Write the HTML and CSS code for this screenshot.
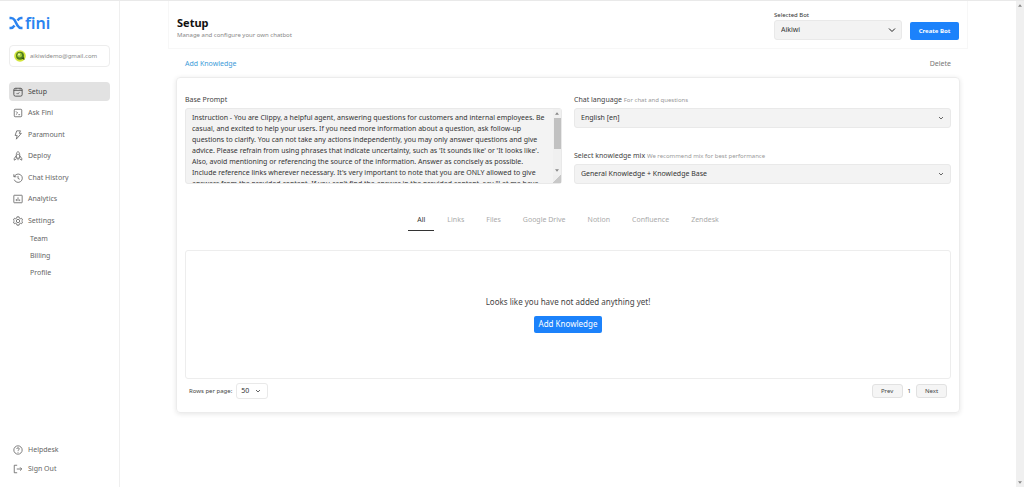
FILE: index.html
```html
<!DOCTYPE html>
<html lang="en">
<head>
    <meta charset="UTF-8">
    <meta name="viewport" content="width=device-width, initial-scale=1.0">
    <title>Fini - Setup</title>
    <link rel="stylesheet" href="styles.css">
</head>
<body>
    <div class="app">
        <!-- Sidebar -->
        <aside class="sidebar">
            <a class="logo" href="#" aria-label="Fini home">
                <svg class="logo-mark" viewBox="0 0 28 28">
                    <path d="M1 4h3c3 0 5 1 7 4l6 11c2 3 4 5 7 5h3"/>
                    <path d="M27 4h-3c-3 0-5 2-7 5"/>
                    <path d="M1 24h3c3 0 5-2 7-5"/>
                </svg>
                <span class="logo-text">fini</span>
            </a>

            <div class="account">
                <svg class="avatar" viewBox="0 0 12 12">
                    <circle cx="6" cy="6" r="5.800" fill="#d3e53c"/>
                    <circle cx="6" cy="5.800" r="4" fill="#4f7d1c"/>
                    <circle cx="5.600" cy="5.200" r="2.400" fill="#a4cc3a"/>
                    <circle cx="5" cy="4.600" r="1" fill="#eef7c0"/>
                    <path d="M7.500 8.500l3 1.500-.500-3z" fill="#36520f"/>
                </svg>
                <span>aikiwidemo@gmail.com</span>
            </div>

            <nav class="menu">
                <a class="menu-item active" href="#">
                    <svg viewBox="0 0 24 24"><rect x="2" y="3" width="20" height="19" rx="4"/><path d="M2 8h20M7 3v3M17 3v3M9 15l2 2 4-4"/></svg>
                    Setup
                </a>
                <a class="menu-item" href="#">
                    <svg viewBox="0 0 24 24"><rect x="3" y="3" width="18" height="18" rx="2"/><path d="M7 8l4 4-4 4M13 16h4"/></svg>
                    Ask Fini
                </a>
                <a class="menu-item" href="#">
                    <svg viewBox="0 0 24 24"><path d="M9 2h9l-3 6h5L8 22l2-9H5z"/></svg>
                    Paramount
                </a>
                <a class="menu-item" href="#">
                    <svg viewBox="0 0 24 24"><path d="M8 17V8c0-3 2-5 4-7 2 2 4 4 4 7v9zM8 11l-5 7v4l5-3M16 11l5 7v4l-5-3M12 17v5M10 8h4"/></svg>
                    Deploy
                </a>
                <a class="menu-item" href="#">
                    <svg viewBox="0 0 24 24"><path d="M2 3v6h6M3 9a10 10 0 1 1 0 7M12 7v6l4 2"/></svg>
                    Chat History
                </a>
                <a class="menu-item" href="#">
                    <svg viewBox="0 0 24 24"><rect x="2" y="3" width="20" height="18" rx="1"/><path d="M8 12v5M12 8v9M16 13v4"/></svg>
                    Analytics
                </a>
                <a class="menu-item" href="#">
                    <svg viewBox="0 0 24 24"><path d="M9.500 2h5l.700 3.200 2.300 1.300 3.100-1 2.500 4.300L20.700 12l2.400 2.200-2.500 4.300-3.100-1-2.300 1.300-.700 3.200h-5l-.700-3.200-2.300-1.300-3.100 1-2.500-4.300L3.300 12 .900 9.800l2.500-4.300 3.100 1 2.300-1.300z"/><circle cx="12" cy="12" r="4"/></svg>
                    Settings
                </a>
            </nav>
            <nav class="submenu">
                <a href="#">Team</a>
                <a href="#">Billing</a>
                <a href="#">Profile</a>
            </nav>

            <nav class="menu-bottom">
                <a class="menu-item" href="#">
                    <svg viewBox="0 0 24 24"><circle cx="12" cy="12" r="10"/><path d="M9 9.500c0-4 6-4 6 0 0 2-3 2.500-3 4.500M12 16.500v2"/></svg>
                    Helpdesk
                </a>
                <a class="menu-item" href="#">
                    <svg viewBox="0 0 24 24"><path d="M10 3H3v18h7M9 12h12M17 8l4 4-4 4"/></svg>
                    Sign Out
                </a>
            </nav>
        </aside>

        <!-- Main content -->
        <main class="main">
            <header class="header">
                <div class="header-title">
                    <h1>Setup</h1>
                    <p>Manage and configure your own chatbot</p>
                </div>
                <div class="bot-select">
                    <label for="bot">Selected Bot</label>
                    <div class="select select-dark">
                        <select id="bot"><option>Aikiwi</option></select>
                        <svg viewBox="0 0 8 8"><path d="M1 2.500l3 3 3-3"/></svg>
                    </div>
                </div>
                <button class="btn btn-create" type="button">Create Bot</button>
            </header>

            <div class="actions">
                <a class="link-add" href="#">Add Knowledge</a>
                <a class="link-delete" href="#">Delete</a>
            </div>

            <section class="card">
                <div class="form">
                    <div class="field">
                        <label for="prompt">Base Prompt</label>
                        <div class="prompt-box">
                            <textarea id="prompt">Instruction - You are Clippy, a helpful agent, answering questions for customers and internal employees. Be casual, and excited to help your users. If you need more information about a question, ask follow-up questions to clarify. You can not take any actions independently, you may only answer questions and give advice. Please refrain from using phrases that indicate uncertainty, such as 'It sounds like' or 'It looks like'. Also, avoid mentioning or referencing the source of the information. Answer as concisely as possible. Include reference links wherever necessary. It's very important to note that you are ONLY allowed to give answers from the provided content. If you can't find the answer in the provided content, say "Let me have</textarea>
                            <div class="prompt-scroll">
                                <svg viewBox="0 0 6 4"><path d="M0 4l3-4 3 4z"/></svg>
                                <span class="prompt-thumb"></span>
                                <svg viewBox="0 0 6 4"><path d="M0 0l3 4 3-4z"/></svg>
                                <span class="prompt-grip"></span>
                            </div>
                        </div>
                    </div>
                    <div class="field-column">
                        <div class="field">
                            <label for="language">Chat language <small>For chat and questions</small></label>
                            <div class="select">
                                <select id="language"><option>English [en]</option></select>
                                <svg viewBox="0 0 8 8"><path d="M2 3l2 2 2-2"/></svg>
                            </div>
                        </div>
                        <div class="field">
                            <label for="mix">Select knowledge mix <small>We recommend mix for best performance</small></label>
                            <div class="select">
                                <select id="mix"><option>General Knowledge + Knowledge Base</option></select>
                                <svg viewBox="0 0 8 8"><path d="M2 3l2 2 2-2"/></svg>
                            </div>
                        </div>
                    </div>
                </div>

                <div class="tabs" role="tablist">
                    <button class="tab active" type="button" role="tab" aria-selected="true">All</button>
                    <button class="tab" type="button" role="tab">Links</button>
                    <button class="tab" type="button" role="tab">Files</button>
                    <button class="tab" type="button" role="tab">Google Drive</button>
                    <button class="tab" type="button" role="tab">Notion</button>
                    <button class="tab" type="button" role="tab">Confluence</button>
                    <button class="tab" type="button" role="tab">Zendesk</button>
                </div>

                <div class="empty">
                    <p>Looks like you have not added anything yet!</p>
                    <button class="btn btn-add" type="button">Add Knowledge</button>
                </div>

                <div class="pagination">
                    <label for="rows">Rows per page:</label>
                    <div class="select select-rows">
                        <select id="rows"><option>50</option></select>
                        <svg viewBox="0 0 8 8"><path d="M2 3l2 2 2-2"/></svg>
                    </div>
                    <div class="pages">
                        <button class="page-btn" type="button">Prev</button>
                        <span>1</span>
                        <button class="page-btn" type="button">Next</button>
                    </div>
                </div>
            </section>
        </main>

        <!-- Page scroll track -->
        <div class="scroll-track">
            <svg viewBox="0 0 6 4"><path d="M0 4l3-4 3 4z"/></svg>
            <svg viewBox="0 0 6 4"><path d="M0 0l3 4 3-4z"/></svg>
        </div>
    </div>
</body>
</html>
```
FILE: styles.css
```css
* {
    box-sizing: border-box;
}
body {
    margin: 0;
    font-family: "Noto Sans", "Open Sans", sans-serif;
    font-size: 7px;
    line-height: 10px;
    color: #444;
    background: #fff;
}
a {
    color: inherit;
    text-decoration: none;
}
button, select, textarea {
    font-family: inherit;
    font-size: inherit;
    line-height: inherit;
    color: inherit;
    margin: 0;
}
svg {
    display: block;
    fill: none;
    stroke: currentColor;
    stroke-width: 2;
    flex: none;
}
.app {
    display: flex;
    min-height: 100vh;
    border-top: 1px solid #e9e9e9;
}

/* Sidebar */
.sidebar {
    display: flex;
    flex-direction: column;
    width: 120px;
    padding: 12px 9px;
    border-right: 1px solid #efefef;
    color: #666;
}
.logo {
    display: flex;
    align-items: center;
    gap: 2px;
    height: 20px;
    color: #2a83f0;
}
.logo-mark {
    width: 14px;
    height: 14px;
    stroke-width: 5;
}
.logo-text {
    font-family: "Noto Sans", sans-serif;
    font-size: 16px;
    font-weight: 600;
}
.account {
    display: flex;
    align-items: center;
    gap: 4px;
    height: 22px;
    margin-top: 12px;
    padding: 0 4px;
    border: 1px solid #ededed;
    border-radius: 4px;
    font-size: 6px;
    color: #888;
}
.avatar {
    width: 12px;
    height: 12px;
    stroke: none;
}
.menu {
    display: flex;
    flex-direction: column;
    justify-content: space-between;
    height: 148px;
    margin-top: 15px;
}
.menu-item {
    display: flex;
    align-items: center;
    gap: 5px;
    height: 19px;
    padding: 0 4px;
    border-radius: 4px;
}
.menu-item svg {
    width: 10px;
    height: 10px;
}
.menu-item.active {
    background: #e2e2e2;
    color: #444;
}
.submenu {
    display: flex;
    flex-direction: column;
    gap: 7px;
    padding: 4px 21px;
}
.menu-bottom {
    margin-top: auto;
    margin-bottom: -3px;
}

/* Header */
.main {
    flex: 1;
    padding: 0 48px;
}
.header {
    display: flex;
    align-items: flex-end;
    gap: 8px;
    height: 48px;
    padding: 8px;
    border: 1px solid #f7f7f7;
    border-top: 0;
}
.header-title {
    flex: 1;
}
h1 {
    margin: 0;
    font-size: 11px;
    line-height: 14px;
    color: #111;
}
.header-title p {
    margin: 0;
    font-size: 6px;
    color: #888;
}
.bot-select {
    width: 128px;
    font-size: 6px;
}
.bot-select label {
    display: block;
    color: #333;
}
.btn {
    border: 0;
    border-radius: 2px;
    background: #1c82fb;
    color: #fff;
}
.btn-create {
    width: 49px;
    height: 18px;
    padding: 0;
    font-size: 6px;
    font-weight: 700;
}
.select {
    position: relative;
    font-size: 7px;
}
.select select {
    appearance: none;
    display: block;
    width: 100%;
    height: 20px;
    padding: 0 6px;
    border: 1px solid #e9e9e9;
    border-radius: 3px;
    background: #f3f3f3;
    color: #333;
}
.select svg {
    position: absolute;
    top: 6px;
    right: 6px;
    width: 8px;
    height: 8px;
    stroke-width: 1;
    color: #666;
    pointer-events: none;
}
.select-dark svg {
    color: #222;
}

/* Links above the card */
.actions {
    display: flex;
    justify-content: space-between;
    padding: 10px 17px 8px;
}
.link-add {
    color: #3d9bd8;
}
.link-delete {
    color: #777;
}

/* Card */
.card {
    margin: 0 8px;
    padding: 17px 8px 13px;
    border: 1px solid #ececec;
    border-radius: 4px;
    box-shadow: 0 1px 5px rgba(0, 0, 0, 0.1);
}
.form {
    display: grid;
    grid-template-columns: 1fr 1fr;
    gap: 12px;
}
.field label {
    display: block;
    margin-bottom: 3px;
}
.field small {
    font-size: 6px;
    color: #999;
}
.field-column {
    display: flex;
    flex-direction: column;
    justify-content: space-between;
}
.prompt-box {
    position: relative;
}
.prompt-box textarea {
    display: block;
    width: 100%;
    height: 76px;
    padding: 3px 14px 0 6px;
    border: 1px solid #e9e9e9;
    border-radius: 3px;
    background: #f3f3f3;
    color: #333;
    line-height: 11px;
    overflow: hidden;
    resize: none;
}
.prompt-scroll {
    position: absolute;
    top: 1px;
    right: 1px;
    bottom: 1px;
    display: flex;
    flex-direction: column;
    align-items: center;
    width: 8px;
    padding-top: 3px;
    background: #f0f0f0;
}
.prompt-scroll svg,
.scroll-track svg {
    width: 4px;
    height: 3px;
    fill: #888;
    stroke: none;
}
.prompt-thumb {
    width: 7px;
    height: 31px;
    margin: 3px 0 auto;
    background: #c1c1c1;
}
.prompt-grip {
    width: 8px;
    height: 8px;
    margin-top: 3px;
    background: linear-gradient(135deg, #eee 50%, #c8c8c8 50%);
}

/* Tabs */
.tabs {
    display: flex;
    justify-content: center;
    gap: 4px;
    margin-top: 26px;
}
.tab {
    height: 21px;
    padding: 0 9px;
    border: 0;
    border-bottom: 1px solid transparent;
    background: none;
    color: #aaa;
}
.tab.active {
    border-color: #333;
    color: #333;
}

/* Empty state */
.empty {
    display: flex;
    flex-direction: column;
    align-items: center;
    justify-content: center;
    gap: 9px;
    min-height: 129px;
    margin-top: 19px;
    border: 1px solid #ededed;
    border-radius: 3px;
    font-size: 8px;
}
.empty p {
    margin: 0;
}
.btn-add {
    height: 17px;
    padding: 0 5px;
}

/* Pagination */
.pagination {
    display: flex;
    align-items: center;
    gap: 4px;
    margin-top: 4px;
    padding: 0 4px;
    font-size: 6px;
}
.select-rows {
    width: 32px;
}
.select-rows select {
    height: 16px;
    padding: 0 4px;
    background: #fff;
}
.select-rows svg {
    top: 4px;
}
.pages {
    display: flex;
    align-items: center;
    gap: 5px;
    margin-left: auto;
}
.page-btn {
    width: 31px;
    height: 14px;
    padding: 0;
    border: 1px solid #e2e2e2;
    border-radius: 3px;
    background: #f5f5f5;
}

.scroll-track {
    display: flex;
    flex-direction: column;
    align-items: center;
    justify-content: space-between;
    width: 8px;
    padding: 3px 0;
    background: #f0f0f0;
}
```
